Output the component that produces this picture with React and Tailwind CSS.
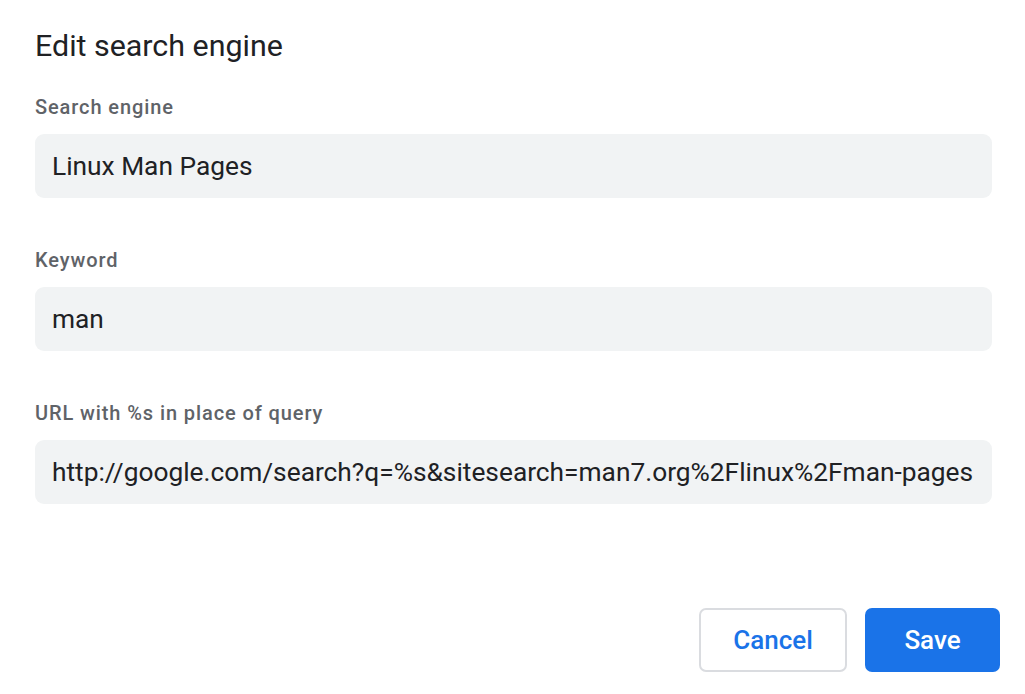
import React from 'react';

const fields = [
  { label: 'Search engine', value: 'Linux Man Pages' },
  { label: 'Keyword', value: 'man' },
  { label: 'URL with %s in place of query', value: 'http://google.com/search?q=%s&sitesearch=man7.org%2Flinux%2Fman-pages' },
];

export default function App() {
  return (
    <div className="w-[1025px] h-[694px] bg-white flex flex-col px-[35px] pt-[26px] pb-[22px] font-['Roboto',sans-serif] text-[#202124]">
      <h2 className="text-[30.4px] leading-[40px] font-normal">Edit search engine</h2>

      <div className="mt-[28px] flex flex-col gap-[49px]">
        {fields.map(f => (
          <div key={f.label} className="flex flex-col">
            <label className="text-[20px] leading-[26px] font-medium tracking-[0.9px] text-[#5f6368]">{f.label}</label>
            <input
              readOnly
              value={f.value}
              className="mt-[14px] w-[957px] h-[64px] rounded-[9px] bg-[#f1f3f4] px-[17px] text-[26.3px] text-[#202124] outline-none font-['Roboto',sans-serif]"
            />
          </div>
        ))}
      </div>

      <div className="mt-auto flex justify-end gap-[18px] mr-[-10px]">
        <button className="w-[148px] h-[64px] rounded-[7px] border-2 border-[#dadce0] bg-white text-[26px] font-medium text-[#1a73e8]">
          Cancel
        </button>
        <button className="w-[135px] h-[64px] rounded-[7px] bg-[#1a73e8] text-[26px] font-medium text-white">
          Save
        </button>
      </div>
    </div>
  );
}
